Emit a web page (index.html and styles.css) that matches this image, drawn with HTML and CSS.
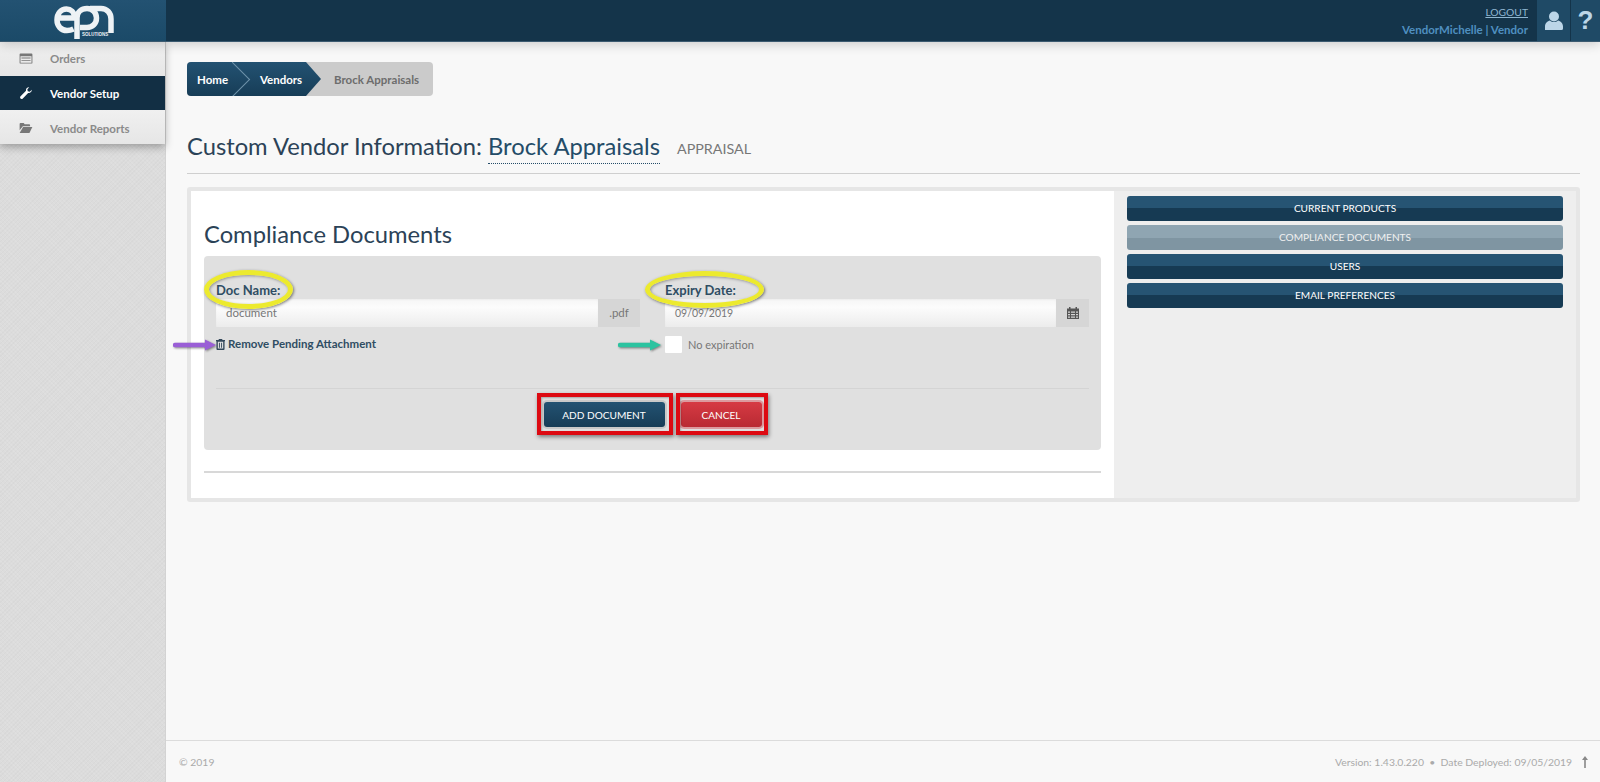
FILE: index.html
```html
<!DOCTYPE html>
<html lang="en">
<head>
<meta charset="utf-8">
<title>Custom Vendor Information</title>
<link rel="stylesheet" href="styles.css">
</head>
<body>
<header class="topbar">
  <div class="brand">
    <svg class="logo" viewBox="0 0 60 40" width="60" height="40" aria-label="epn solutions">
      <g fill="none" stroke="#eef2f5" stroke-width="5.500">
        <path d="M5 18H20.500C20.500 12 16.500 9 12.500 9C7 9 3 13.500 3 20C3 26 7 30.500 13 30.500C15.500 30.500 17.500 30 19.500 29"/>
        <path d="M23 39V18C23 12 27.500 8.500 33 8.500C38.500 8.500 42.500 12.500 42.500 18C42.500 23.500 38.500 27.500 33 27.500H26"/>
        <path d="M36 8.500H47C53 8.500 57 13 57 19V33"/>
      </g>
      <text x="28" y="36" class="logo-sub">SOLUTIONS</text>
    </svg>
  </div>
  <div class="topspace"></div>
  <div class="account">
    <a class="logout" href="#">LOGOUT</a>
    <div class="who">VendorMichelle | Vendor</div>
  </div>
  <div class="topicon">
    <svg viewBox="0 0 20 20" width="20" height="20"><circle cx="10" cy="5.500" r="5" fill="#bcd6e8"/><path d="M1 19V15.500C1 12 3.500 10 6 9.500C8 11.500 12 11.500 14 9.500C16.500 10 19 12 19 15.500V17.500Q19 19 17.500 19Z" fill="#bcd6e8"/></svg>
  </div>
  <div class="topicon help">?</div>
</header>

<div class="shell">
  <aside class="sidebar">
    <nav class="menu">
      <a class="menu-item" href="#">
        <svg class="menu-icon" viewBox="0 0 14 12" width="13" height="11"><path d="M0 1.500Q0 .5 1 .5H13Q14 .5 14 1.500V10.500Q14 11.500 13 11.500H1Q0 11.500 0 10.500ZM1 3.500V10.500H13V3.500ZM2 5H12V6H2ZM2 7.500H12V8.500H2Z" fill="#777" fill-rule="evenodd"/></svg>
        <span>Orders</span>
      </a>
      <a class="menu-item active" href="#">
        <svg class="menu-icon" viewBox="0 0 14 14" width="12" height="12"><path d="M13.700 3.200C13.900 5.400 12 7.500 9.500 7L3.300 13.300C2.500 14.100 1.200 14.100.6 13.400C-.1 12.700-.1 11.500.7 10.800L7 4.500C6.500 2 8.600 .1 10.800 .3L8.600 2.500 9 5 11.500 5.400Z" fill="#fff"/></svg>
        <span>Vendor Setup</span>
      </a>
      <a class="menu-item" href="#">
        <svg class="menu-icon" viewBox="0 0 14 11" width="13" height="10"><path d="M0 1Q0 0 1 0H4.500L5.500 1.500H10.500Q11.500 1.500 11.500 2.500V3.500H3.500L0 8Z" fill="#777"/><path d="M3.800 4.500H14L10.800 11H0Z" fill="#777"/></svg>
        <span>Vendor Reports</span>
      </a>
    </nav>
  </aside>

  <main class="content">
    <div class="crumbs">
      <a class="crumb crumb-home" href="#">Home</a>
      <a class="crumb crumb-vendors" href="#">Vendors</a>
      <span class="crumb crumb-current">Brock Appraisals</span>
    </div>

    <div class="page-title">
      <h1>Custom Vendor Information:</h1>
      <a class="title-name" href="#">Brock Appraisals</a>
      <span class="title-type">APPRAISAL</span>
    </div>

    <section class="panel">
      <div class="panel-main">
        <h2>Compliance Documents</h2>
        <form class="doc-form">
          <div class="fields">
            <div class="field">
              <label class="field-label">Doc Name:</label>
              <div class="input-group">
                <div class="input">document</div>
                <div class="addon">.pdf</div>
              </div>
              <a class="remove" href="#">
                <svg viewBox="0 0 10 12" width="9" height="11"><path d="M3 1V0H7V1H10V2.500H9.500V11Q9.500 12 8.500 12H1.500Q.5 12 .5 11V2.500H0V1ZM2 3V10.500H8V3ZM3.300 4H4.300V9.500H3.300ZM5.700 4H6.700V9.500H5.700Z" fill="#33475a" fill-rule="evenodd"/></svg>
                <span>Remove Pending Attachment</span>
              </a>
            </div>
            <div class="field">
              <label class="field-label">Expiry Date:</label>
              <div class="input-group">
                <div class="input input-date">09/09/2019</div>
                <div class="addon addon-icon">
                  <svg viewBox="0 0 12 12" width="12" height="12"><path d="M2 0H3.500V1.500H8.500V0H10V1.500H12V12H0V1.500H2ZM1 4.500V5.800H3V4.500ZM4 4.500V5.800H8V4.500ZM9 4.500V5.800H11V4.500ZM1 7V8.300H3V7ZM4 7V8.300H8V7ZM9 7V8.300H11V7ZM1 9.500V10.800H3V9.500ZM4 9.500V10.800H8V9.500ZM9 9.500V10.800H11V9.500Z" fill="#555" fill-rule="evenodd"/></svg>
                </div>
              </div>
              <div class="check-row">
                <span class="checkbox"></span>
                <span>No expiration</span>
              </div>
            </div>
          </div>
          <div class="actions">
            <button type="button" class="btn btn-add">ADD DOCUMENT</button>
            <button type="button" class="btn btn-cancel">CANCEL</button>
          </div>
        </form>
        <div class="rule"></div>
      </div>
      <div class="panel-side">
        <a class="side-btn" href="#">CURRENT PRODUCTS</a>
        <a class="side-btn is-current" href="#">COMPLIANCE DOCUMENTS</a>
        <a class="side-btn" href="#">USERS</a>
        <a class="side-btn" href="#">EMAIL PREFERENCES</a>
      </div>
    </section>

    <footer class="footer">
      <span class="copyright">© 2019</span>
      <span class="footer-right"><span>Version: 1.43.0.220 &nbsp;•&nbsp; Date Deployed: 09/05/2019</span><svg class="footer-arrow" viewBox="0 0 8 12" width="8" height="12"><path d="M4 0L7 4H4.800V12H3.200V4H1Z" fill="#888"/></svg></span>
    </footer>
  </main>
</div>

<!-- hand-drawn markup laid over the screenshot -->
<div class="mark mark-ellipse mark-e1"></div>
<div class="mark mark-ellipse mark-e2"></div>
<div class="mark mark-box mark-b1"></div>
<div class="mark mark-box mark-b2"></div>
<svg class="mark mark-arrow mark-a1" viewBox="0 0 46 14" width="46" height="14"><path d="M2 7H32" stroke="#9a5fd6" stroke-width="4.500" stroke-linecap="round"/><path d="M32 1.500L43 7L32 12.500Z" fill="#9a5fd6"/></svg>
<svg class="mark mark-arrow mark-a2" viewBox="0 0 46 14" width="46" height="14"><path d="M2 7H32" stroke="#2cc3a0" stroke-width="4.500" stroke-linecap="round"/><path d="M32 1.500L43 7L32 12.500Z" fill="#2cc3a0"/></svg>
</body>
</html>
```
FILE: styles.css
```css
* { box-sizing: border-box; }
html, body { margin: 0; height: 100%; }
body {
  width: 1600px;
  height: 782px;
  overflow: hidden;
  position: relative;
  display: flex;
  flex-direction: column;
  background: #f8f8f8;
  font-family: Lato, "Noto Sans", sans-serif;
  color: #2b4257;
}
a { text-decoration: none; color: inherit; }

/* top bar */
.topbar {
  height: 42px;
  flex: none;
  display: flex;
  background: #14344a;
  border-bottom: 1px solid #3b5a70;
  box-shadow: 0 3px 10px rgba(0, 0, 0, .16);
  position: relative;
  z-index: 3;
}
.brand {
  width: 166px;
  background: linear-gradient(#235272, #1b4a68);
  display: flex;
  justify-content: center;
  padding-left: 1px;
}
.logo { display: block; }
.logo-sub { font: 700 4.500px "Liberation Sans", sans-serif; fill: #eef2f5; }
.topspace { flex: 1; }
.account {
  display: flex;
  flex-direction: column;
  align-items: flex-end;
  padding: 4px 8px 0 0;
  font-size: 11.500px;
  line-height: 17px;
}
.logout { color: #8fb6d1; text-decoration: underline; font-size: 10.300px; }
.who { color: #4f8fc0; font-weight: 700; }
.topicon {
  width: 34px;
  background: #1f4a66;
  border-left: 1px solid #14344a;
  display: flex;
  align-items: center;
  justify-content: center;
}
.topicon.help {
  font: 700 26px "Liberation Sans", sans-serif;
  color: #bcd6e8;
  width: 30px;
}

/* layout */
.shell { flex: 1; display: flex; min-height: 0; }
.sidebar {
  width: 166px;
  flex: none;
  background-color: #dcdcdc;
  background-image: repeating-linear-gradient(45deg, rgba(255,255,255,.08) 0 1px, transparent 1px 3px), repeating-linear-gradient(-45deg, rgba(0,0,0,.02) 0 1px, transparent 1px 3px);
  border-right: 1px solid #d3d3d3;
}
.menu {
  box-shadow: 0 3px 8px rgba(0, 0, 0, .3);
  background: #eee;
}
.menu-item {
  height: 34px;
  display: flex;
  align-items: center;
  padding-left: 19px;
  gap: 17px;
  font-size: 11.500px;
  font-weight: 700;
  color: #8a8a8a;
  background: linear-gradient(#f0f0f0, #e6e6e6);
}
.menu-item:first-child { padding-bottom: 2px; }
.menu-item:last-child { padding-top: 2px; }
.menu-item .menu-icon { flex: none; width: 14px; }
.menu-item.active { background: #122f44; color: #fff; }

.content {
  flex: 1;
  min-width: 0;
  display: flex;
  flex-direction: column;
  padding: 20px 20px 0 21px;
}

/* breadcrumbs */
.crumbs {
  width: 246px;
  height: 34px;
  display: flex;
  align-items: center;
  border-radius: 4px;
  background: #cbcbcb;
  font-size: 11.500px;
  font-weight: 700;
  overflow: hidden;
  flex: none;
}
.crumb { height: 34px; display: flex; align-items: center; }
.crumb-home {
  width: 45px;
  padding-left: 10px;
  color: #fff;
  background: linear-gradient(#235272, #173d57);
  z-index: 1;
}
.crumb-vendors {
  width: 89px;
  padding-left: 28px;
  color: #fff;
  background: linear-gradient(#235272, #173d57);
  clip-path: polygon(0 0, 74px 0, 100% 50%, 74px 100%, 0 100%);
  position: relative;
}
.crumb-vendors::before {
  content: "";
  width: 24px;
  height: 24px;
  position: absolute;
  left: -12px;
  top: 5px;
  transform: rotate(45deg);
  border-top: 1px solid #6f93ab;
  border-right: 1px solid #6f93ab;
}
.crumb-current { padding-left: 13px; color: #6d6d6d; }

/* heading */
.page-title {
  margin-top: 31px;
  height: 47px;
  flex: none;
  display: flex;
  align-items: flex-start;
  border-bottom: 1px solid #cfcfcf;
  font-size: 23.750px;
  line-height: 38px;
}
.page-title h1 { margin: 0; font: inherit; color: #2b4257; }
.title-name {
  margin-left: 6px;
  height: 37px;
  color: #244c68;
  border-bottom: 1px dotted #244c68;
}
.title-type { margin-left: 17px; font-size: 14.300px; line-height: 44px; color: #777; }

/* panel */
.panel {
  margin-top: 13px;
  height: 315px;
  flex: none;
  display: flex;
  border: 4px solid #e6e6e6;
  border-radius: 3px;
  background: #eee;
}
.panel-main {
  width: 923px;
  flex: none;
  background: #fff;
  padding: 26px 13px 0;
}
.panel-main h2 {
  margin: 0;
  font-size: 23.750px;
  font-weight: 400;
  line-height: 34px;
  color: #2b4257;
}
.doc-form {
  margin-top: 5px;
  height: 194px;
  background: #e0e0e0;
  border-radius: 4px;
  padding: 25px 12px 0;
}
.fields { display: flex; gap: 25px; height: 108px; border-bottom: 1px solid #d4d4d4; }
.field { flex: 1; min-width: 0; }
.field:first-child { flex: 0 0 424px; }
.field-label { display: block; font-size: 13px; font-weight: 700; line-height: 18px; color: #2f4d63; }
.input-group { display: flex; height: 28px; }
.input {
  flex: 1;
  padding-left: 10px;
  font-size: 11.500px;
  line-height: 28px;
  color: #777;
  background: linear-gradient(#f6f6f6, #fcfcfc 30%, #ececec);
  box-shadow: inset 0 1px 2px rgba(0, 0, 0, .04);
}
.input-date { font-size: 10.500px; }
.addon {
  width: 42px;
  text-align: center;
  font-size: 11.500px;
  line-height: 28px;
  color: #777;
  background: #d6d6d6;
}
.addon-icon { width: 33px; display: flex; align-items: center; justify-content: center; }
.remove {
  margin-top: 9px;
  display: flex;
  align-items: center;
  gap: 3px;
  font-size: 11.500px;
  font-weight: 700;
  line-height: 16px;
  color: #2f4d63;
}
.check-row {
  margin-top: 9px;
  display: flex;
  align-items: center;
  gap: 6px;
  font-size: 11px;
  color: #777;
  height: 17px;
}
.checkbox { width: 17px; height: 17px; background: #fff; border-radius: 1px; }
.actions { display: flex; justify-content: center; gap: 16px; margin-top: 13px; }
.btn {
  height: 25px;
  padding: 0;
  border: 0;
  border-radius: 3px;
  font: 400 10.100px Lato, sans-serif;
  color: #fff;
}
.btn-add { width: 121px; background: linear-gradient(#235272, #173d57); box-shadow: 0 0 0 2px #c9c9c9; }
.btn-cancel { width: 81px; background: linear-gradient(#d63a43, #b92a33); box-shadow: 0 0 0 2px #dc9a9e; }
.rule { margin-top: 21px; height: 2px; background: #d8d8d8; }

.panel-side {
  flex: 1;
  padding: 5px 13px 0 13px;
  display: flex;
  flex-direction: column;
  gap: 4px;
}
.side-btn {
  height: 25px;
  border-radius: 3px;
  font-size: 10.100px;
  font-weight: 400;
  line-height: 25px;
  text-align: center;
  color: #fff;
  background: linear-gradient(#265473 0 50%, #163a53 50% 100%);
}
.side-btn.is-current { background: linear-gradient(#8fa5b2 0 50%, #7f95a2 50% 100%); color: #f0f0f0; }

/* footer */
.footer {
  margin: auto -20px 0 -21px;
  height: 42px;
  flex: none;
  padding: 0 11px 0 13px;
  display: flex;
  align-items: center;
  justify-content: space-between;
  border-top: 1px solid #dcdcdc;
  font-size: 10.400px;
  color: #aaa;
}
.footer-right { display: flex; align-items: center; gap: 9px; }

/* annotations laid over the screenshot */
.mark { position: absolute; pointer-events: none; z-index: 5; }
.mark-ellipse {
  border: 5px solid #ecea2e;
  border-radius: 50%;
  box-shadow: 1px 1px 3px rgba(0, 0, 0, .5), inset 1px 1px 3px rgba(0, 0, 0, .35);
}
.mark-e1 { left: 204px; top: 270px; width: 89px; height: 39px; }
.mark-e2 { left: 645px; top: 271px; width: 119px; height: 37px; }
.mark-box {
  border: 4px solid #dd0a12;
  box-shadow: 1px 2px 4px rgba(0, 0, 0, .45), inset 1px 1px 2px rgba(0, 0, 0, .25);
}
.mark-b1 { left: 537px; top: 393px; width: 136px; height: 42px; }
.mark-b2 { left: 676px; top: 393px; width: 92px; height: 42px; }
.mark-arrow { filter: drop-shadow(1px 1px 1px rgba(0, 0, 0, .45)); }
.mark-a1 { left: 173px; top: 338px; }
.mark-a2 { left: 618px; top: 338px; }
```
